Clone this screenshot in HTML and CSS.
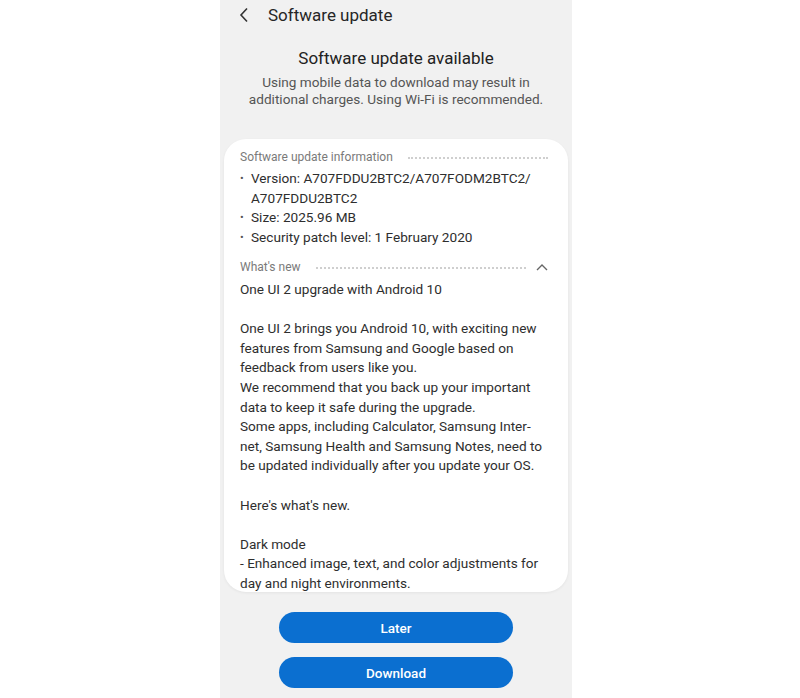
FILE: index.html
```html
<!doctype html>
<html lang="en">
<head>
    <meta charset="utf-8"/>
    <title>Software update</title>
    <link rel="stylesheet" href="styles.css">
</head>
<body>
    <div class="phone">
        <div class="topbar">
            <svg class="back" width="12" height="16" viewBox="0 0 12 16"><path d="M9 1.5 L3 8 L9 14.5" fill="none" stroke="#333" stroke-width="1.6"/></svg>
            <span class="title">Software update</span>
        </div>

        <div class="intro">
            <h1>Software update available</h1>
            <p>Using mobile data to download may result in<br>additional charges. Using Wi-Fi is recommended.</p>
        </div>

        <div class="card">
            <div class="section-head">
                <span>Software update information</span>
                <i class="dots"></i>
            </div>
            <ul class="info">
                <li>Version: A707FDDU2BTC2/A707FODM2BTC2/ A707FDDU2BTC2</li>
                <li>Size: 2025.96 MB</li>
                <li>Security patch level: 1 February 2020</li>
            </ul>
            <div class="section-head">
                <span>What's new</span>
                <i class="dots"></i>
                <svg class="chev" width="12" height="8" viewBox="0 0 12 8"><path d="M1 7 L6 2 L11 7" fill="none" stroke="#666" stroke-width="1.4"/></svg>
            </div>
            <div class="notes">
                <p>One UI 2 upgrade with Android 10</p>
                <p>One UI 2 brings you Android 10, with exciting new features from Samsung and Google based on feedback from users like you.<br>We recommend that you back up your important data to keep it safe during the upgrade.<br>Some apps, including Calculator, Samsung Inter-<br>net, Samsung Health and Samsung Notes, need to be updated individually after you update your OS.</p>
                <p>Here's what's new.</p>
                <p>Dark mode<br>- Enhanced image, text, and color adjustments for day and night environments.</p>
            </div>
        </div>

        <div class="actions">
            <button class="btn">Later</button>
            <button class="btn">Download</button>
        </div>
    </div>
</body>
</html>
```

FILE: styles.css
```css
body, h1, p, ul, li {
    margin: 0;
    padding: 0;
    list-style: none;
}

body {
    background: #fff;
    font-family: Roboto, "Noto Sans", sans-serif;
    color: #2b2b2b;
}

.phone {
    width: 352px;
    height: 698px;
    margin-left: 220px;
    background: #f1f1f1;
    display: flex;
    flex-direction: column;
    overflow: hidden;
}

.topbar {
    height: 30px;
    display: flex;
    align-items: center;
    padding-left: 18px;
}

.back {
    margin-right: 18px;
}

.title {
    font-size: 17px;
    color: #262626;
}

.intro {
    text-align: center;
    padding: 17px 8px 0;
}

.intro h1 {
    font-size: 17px;
    font-weight: 400;
    color: #222;
    line-height: 22px;
}

.intro p {
    margin-top: 5px;
    font-size: 13.6px;
    line-height: 17px;
    color: #555;
}

.card {
    margin: 31px 4px 0;
    background: #fff;
    border-radius: 22px;
    padding: 8px 20px 0 16px;
    height: 445px;
    box-shadow: 0 1px 3px rgba(0, 0, 0, 0.06);
    overflow: hidden;
}

.section-head {
    display: flex;
    align-items: center;
    font-size: 12px;
    color: #7a7a7a;
    height: 20px;
}

.dots {
    flex: 1;
    margin-left: 15px;
    border-bottom: 2px dotted #cfcfcf;
    height: 0;
    margin-top: 1px;
}

.chev {
    margin-left: 10px;
}

.info {
    margin: 2px 0 10px;
}

.info li {
    font-size: 13.6px;
    line-height: 19.5px;
    color: #2e2e2e;
    padding-left: 11px;
    position: relative;
}

.info li::before {
    content: "•";
    position: absolute;
    left: 0;
    font-size: 11px;
    color: #555;
}

.notes {
    margin-top: 3px;
}

.notes p {
    font-size: 13.6px;
    line-height: 19.6px;
    color: #2e2e2e;
    margin-bottom: 19.6px;
}

.actions {
    display: flex;
    flex-direction: column;
    align-items: center;
    gap: 14px;
    margin-top: 20px;
}

.btn {
    width: 234px;
    height: 31px;
    border: none;
    border-radius: 16px;
    background: #0b6fd0;
    color: #fff;
    font-family: Roboto, "Noto Sans", sans-serif;
    font-size: 13.5px;
    font-weight: 500;
}
```
